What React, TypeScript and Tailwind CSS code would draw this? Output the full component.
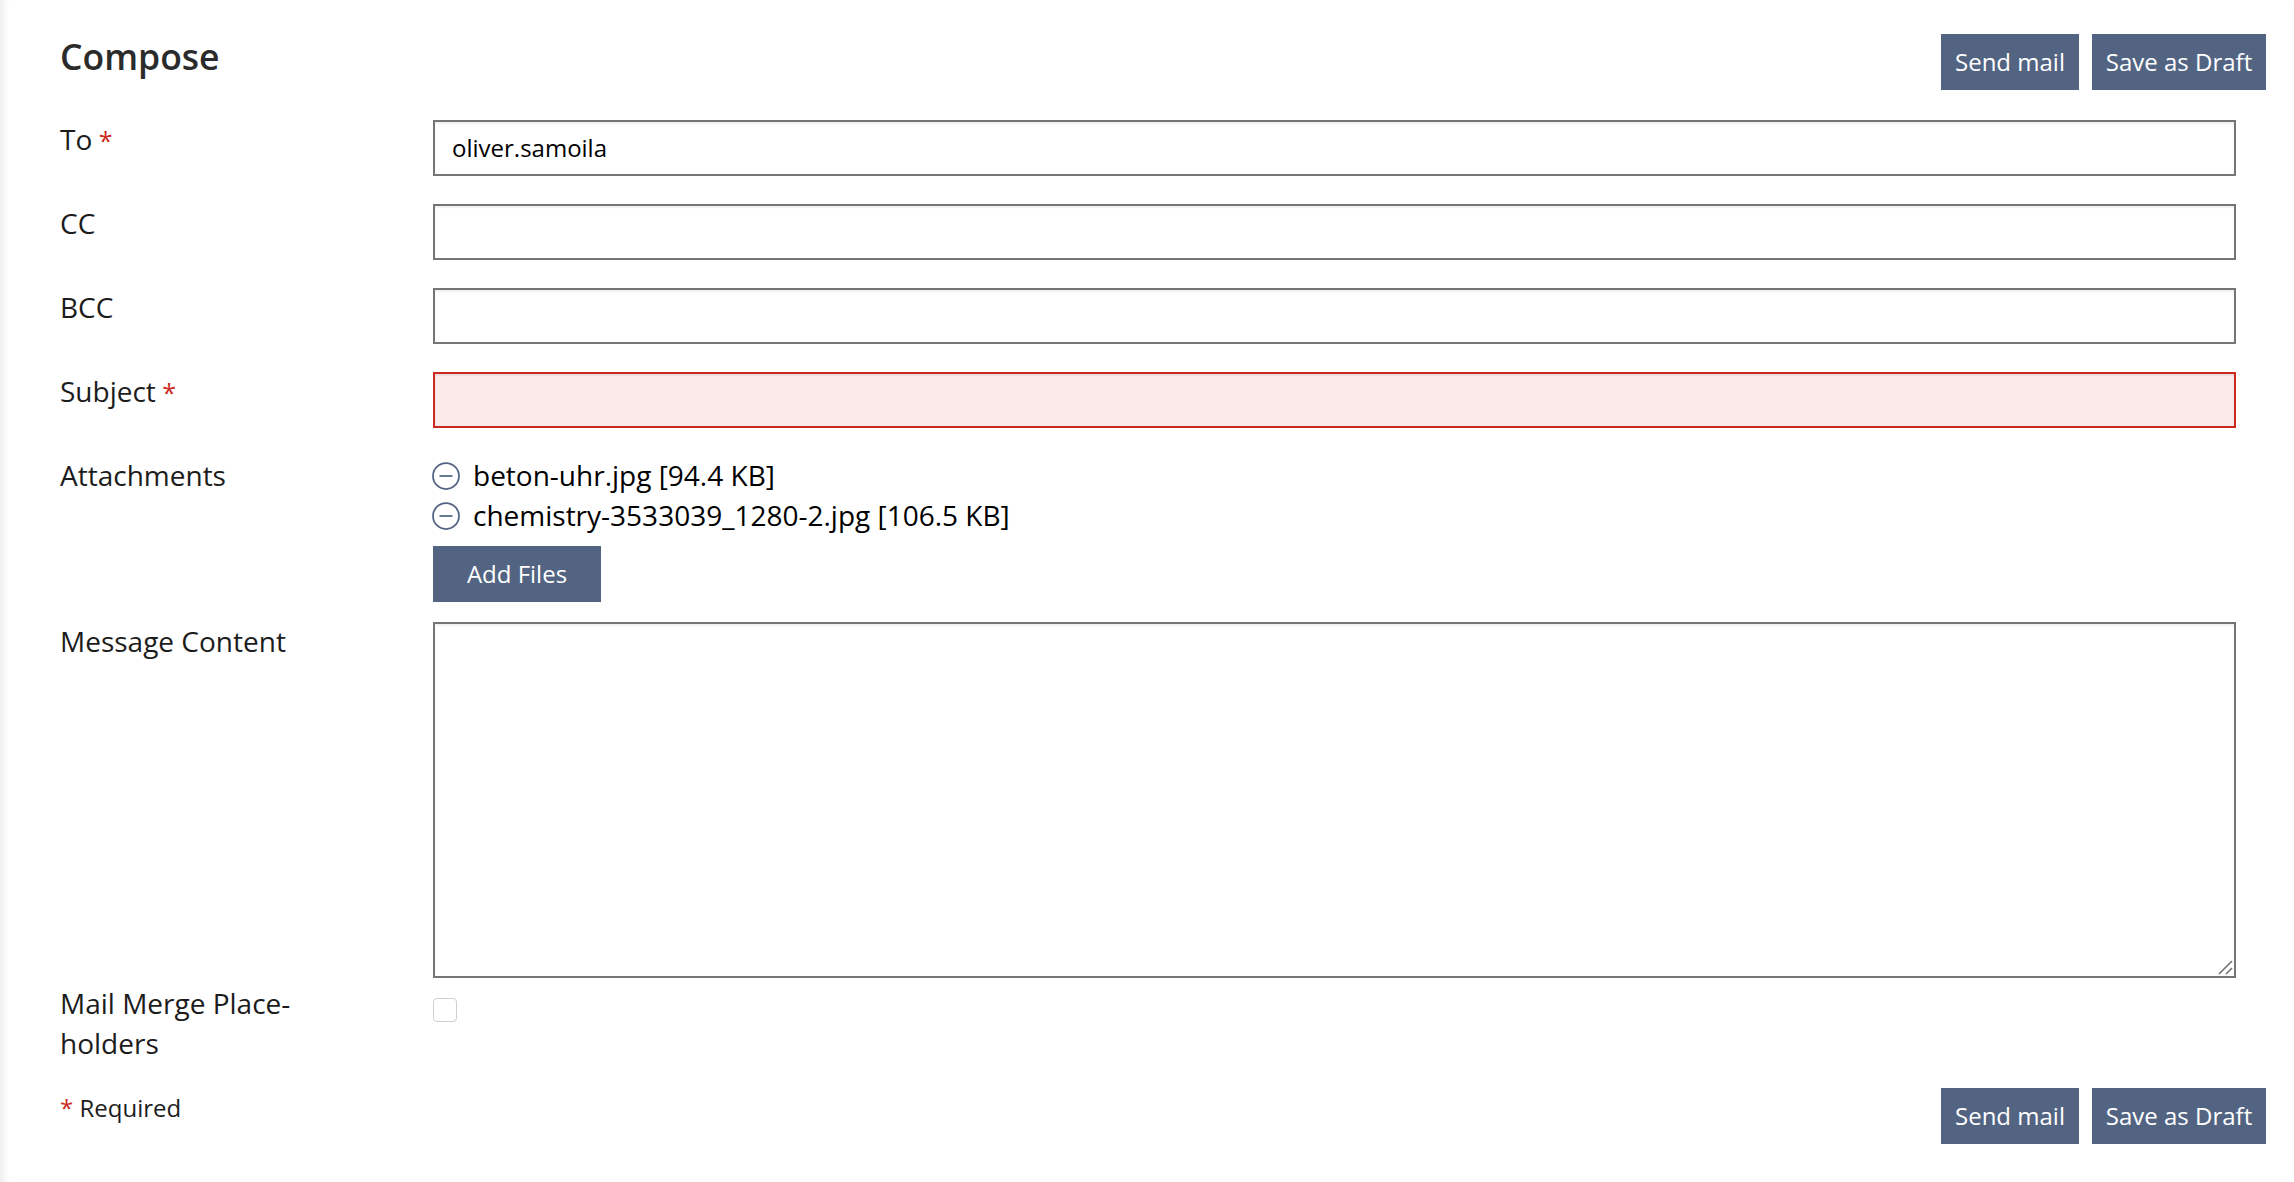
import type { ReactNode } from 'react'

const font = "[font-family:'Open_Sans','Noto_Sans',sans-serif]"

function Actions() {
  return (
    <div className="flex gap-[13px]">
      <button className="h-[56px] w-[138px] bg-[#526482] text-[24px] text-white">Send mail</button>
      <button className="h-[56px] w-[174px] bg-[#526482] text-[24px] text-white">Save as Draft</button>
    </div>
  )
}

function Row({ label, required, children }: { label: string; required?: boolean; children: ReactNode }) {
  return (
    <div className="flex">
      <label className="-mt-[1px] w-[373px] shrink-0 pr-[60px] text-[28px] leading-[40px] text-[#1c1c1c]">
        {label}
        {required && <span className="text-[25px] text-[#cc2a20]"> *</span>}
      </label>
      <div className="w-[1803px]">{children}</div>
    </div>
  )
}

function Attachment({ name }: { name: string }) {
  return (
    <div className="flex h-[40px] items-center gap-[12px] text-[28px] text-black">
      <svg className="-ml-[1px] mr-[1px] shrink-0" width="28" height="28" viewBox="0 0 28 28" fill="none" stroke="#526482" strokeWidth="1.75">
        <circle cx="14" cy="14" r="13" />
        <path d="M7.5 14h13" />
      </svg>
      <span className="-mt-[2px]">{name}</span>
    </div>
  )
}

export default function App() {
  const input =
    'block h-[56px] w-full border-2 border-[#757575] bg-white px-[17px] pb-[2px] text-[24px] text-black shadow-[inset_0_2px_2px_rgba(0,0,0,0.06)] outline-none'

  return (
    <div className={`${font} h-[1182px] w-full bg-white pl-[60px] pr-[28px] pt-[34px] shadow-[inset_8px_0_6px_-4px_#eeeeee]`}>
      <div className="flex items-start justify-between">
        <h1 className="text-[35.5px] font-semibold leading-[44px] text-[#2b2b2b]">Compose</h1>
        <Actions />
      </div>

      <div className="mt-[30px] flex flex-col gap-[28px]">
        <Row label="To" required>
          <input className={input} defaultValue="oliver.samoila" />
        </Row>
        <Row label="CC">
          <input className={input} />
        </Row>
        <Row label="BCC">
          <input className={input} />
        </Row>
        <Row label="Subject" required>
          <input className="block h-[56px] w-full border-2 border-[#cc2a20] bg-[#fceaea] px-[17px] text-[24px] shadow-[inset_0_2px_2px_rgba(0,0,0,0.06)] outline-none" />
        </Row>
      </div>

      <div className="mt-[28px] flex flex-col gap-[20px]">
        <Row label="Attachments">
          <Attachment name="beton-uhr.jpg [94.4 KB]" />
          <Attachment name="chemistry-3533039_1280-2.jpg [106.5 KB]" />
          <button className="mt-[10px] block h-[56px] w-[168px] bg-[#526482] text-[24px] text-white">Add Files</button>
        </Row>
        <Row label="Message Content">
          <div className="relative">
            <textarea className="block h-[356px] w-full resize-none border-2 border-[#757575] bg-white shadow-[inset_0_2px_2px_rgba(0,0,0,0.06)] outline-none" />
            <svg className="pointer-events-none absolute bottom-[3px] right-[3px]" width="15" height="15" viewBox="0 0 15 15" stroke="#757575" strokeWidth="1.75">
              <path d="M1 14 14 1M8 14l6-6" />
            </svg>
          </div>
        </Row>
      </div>

      <div className="mt-[6px]">
        <Row label="Mail Merge Place-holders">
          <span className="mt-[14px] block h-[24px] w-[24px] rounded-[4px] border border-[#cfcfcf] bg-white" />
        </Row>
      </div>

      <div className="mt-[25px] flex items-start justify-between">
        <p className="text-[24px] leading-[40px] text-[#1c1c1c]">
          <span className="text-[#cc2a20]">*</span> Required
        </p>
        <Actions />
      </div>
    </div>
  )
}
